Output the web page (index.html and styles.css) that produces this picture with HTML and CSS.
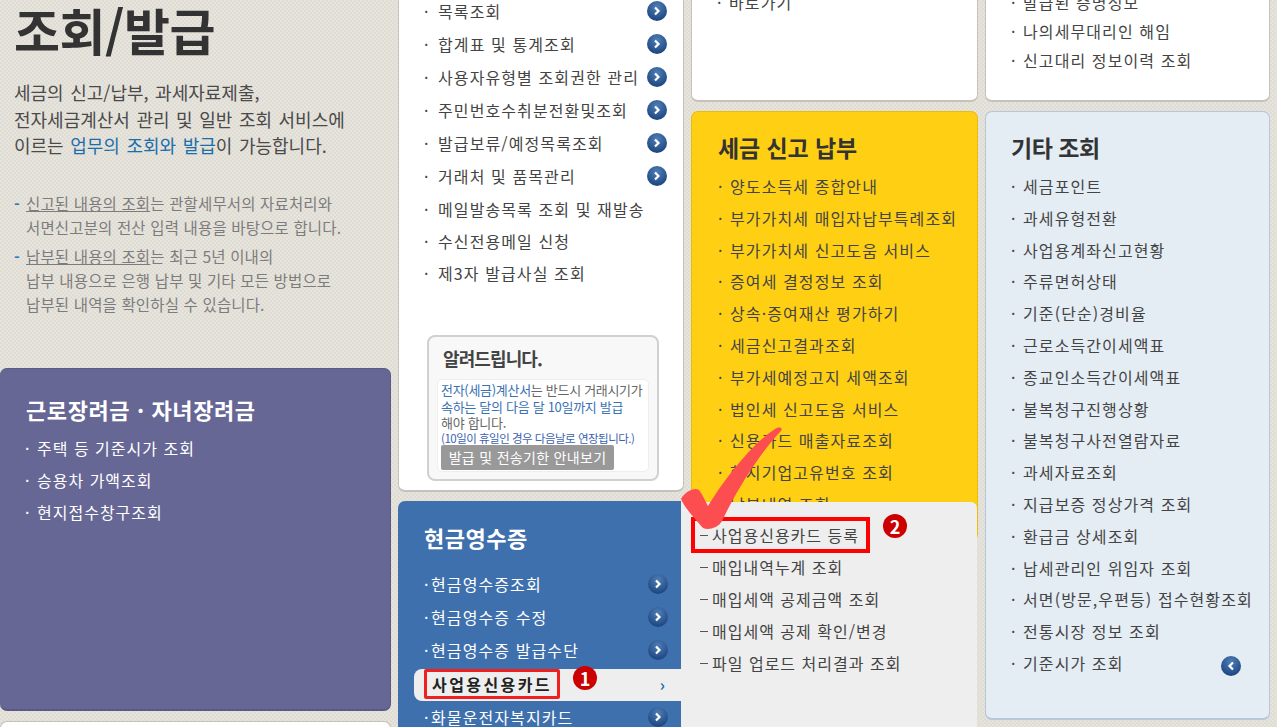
FILE: index.html
```html
<!DOCTYPE html>
<html lang="ko">
<head>
  <meta charset="UTF-8">
  <title>조회/발급</title>
  <link rel="stylesheet" href="styles.css">
</head>
<body>
  <svg class="defs" width="0" height="0">
    <defs>
      <radialGradient id="ball" cx="50%" cy="30%" r="70%">
        <stop offset="0" stop-color="#4f7fb5"/>
        <stop offset="1" stop-color="#1c4480"/>
      </radialGradient>
      <symbol id="go" viewBox="0 0 20 20">
        <circle cx="10" cy="10" r="10" fill="url(#ball)"/>
        <path d="M8 6.5 11.5 10 8 13.5" fill="none" stroke="#fff" stroke-width="2.2"/>
      </symbol>
      <symbol id="back" viewBox="0 0 20 20">
        <circle cx="10" cy="10" r="10" fill="url(#ball)"/>
        <path d="M12 6.5 8.5 10 12 13.5" fill="none" stroke="#fff" stroke-width="2.2"/>
      </symbol>
    </defs>
  </svg>

  <div class="page">
    <div class="col">
      <div class="intro">
        <h1>조회/발급</h1>
        <p class="lead">세금의 신고/납부, 과세자료제출,<br>전자세금계산서 관리 및 일반 조회 서비스에<br>이르는 <b>업무의 조회와 발급</b>이 가능합니다.</p>
        <ul class="notes">
          <li><u>신고된 내용의 조회</u>는 관할세무서의 자료처리와<br>서면신고분의 전산 입력 내용을 바탕으로 합니다.</li>
          <li><u>납부된 내용의 조회</u>는 최근 5년 이내의<br>납부 내용으로 은행 납부 및 기타 모든 방법으로<br>납부된 내역을 확인하실 수 있습니다.</li>
        </ul>
      </div>
      <section class="card purple">
        <h2>근로장려금 · 자녀장려금</h2>
        <ul class="menu">
          <li>주택 등 기준시가 조회</li>
          <li>승용차 가액조회</li>
          <li>현지접수창구조회</li>
        </ul>
      </section>
      <section class="card white stub"></section>
    </div>

    <div class="col">
      <section class="card white issue">
        <ul class="menu">
          <li class="has-go">목록조회<svg class="go"><use href="#go"/></svg></li>
          <li class="has-go">합계표 및 통계조회<svg class="go"><use href="#go"/></svg></li>
          <li class="has-go">사용자유형별 조회권한 관리<svg class="go"><use href="#go"/></svg></li>
          <li class="has-go">주민번호수취분전환및조회<svg class="go"><use href="#go"/></svg></li>
          <li class="has-go">발급보류/예정목록조회<svg class="go"><use href="#go"/></svg></li>
          <li class="has-go">거래처 및 품목관리<svg class="go"><use href="#go"/></svg></li>
          <li>메일발송목록 조회 및 재발송</li>
          <li>수신전용메일 신청</li>
          <li>제3자 발급사실 조회</li>
        </ul>
        <div class="notice">
          <h3>알려드립니다.</h3>
          <div class="notice-body">
            <p><em>전자(세금)계산서</em>는 반드시 거래시기가<br><em>속하는 달의 다음 달 10일까지 발급</em><br>해야 합니다.</p>
            <p class="notice-small">(10일이 휴일인 경우 다음날로 연장됩니다.)</p>
            <span class="notice-btn">발급 및 전송기한 안내보기</span>
          </div>
        </div>
      </section>

      <section class="card blue">
        <h2>현금영수증</h2>
        <ul class="menu">
          <li class="has-go">현금영수증조회<svg class="go"><use href="#go"/></svg></li>
          <li class="has-go">현금영수증 수정<svg class="go"><use href="#go"/></svg></li>
          <li class="has-go">현금영수증 발급수단<svg class="go"><use href="#go"/></svg></li>
          <li class="selected">
            <span class="picked">사업용신용카드</span>
            <span class="badge badge-one">1</span>
            <span class="chev">›</span>
          </li>
          <li class="has-go">화물운전자복지카드<svg class="go"><use href="#go"/></svg></li>
        </ul>
        <div class="flyout">
          <ul>
            <li class="boxed">사업용신용카드 등록<span class="badge badge-two">2</span></li>
            <li>매입내역누계 조회</li>
            <li>매입세액 공제금액 조회</li>
            <li>매입세액 공제 확인/변경</li>
            <li>파일 업로드 처리결과 조회</li>
          </ul>
        </div>
      </section>
    </div>

    <div class="col">
      <section class="card white short">
        <ul class="menu">
          <li>바로가기</li>
        </ul>
      </section>
      <section class="card yellow">
        <h2>세금 신고 납부</h2>
        <ul class="menu">
          <li>양도소득세 종합안내</li>
          <li>부가가치세 매입자납부특례조회</li>
          <li>부가가치세 신고도움 서비스</li>
          <li>증여세 결정정보 조회</li>
          <li>상속·증여재산 평가하기</li>
          <li>세금신고결과조회</li>
          <li>부가세예정고지 세액조회</li>
          <li>법인세 신고도움 서비스</li>
          <li>신용카드 매출자료조회</li>
          <li>현지기업고유번호 조회</li>
          <li>납부내역 조회</li>
        </ul>
      </section>
    </div>

    <div class="col">
      <section class="card white short agent">
        <ul class="menu">
          <li>발급된 증명정보</li>
          <li>나의세무대리인 해임</li>
          <li>신고대리 정보이력 조회</li>
        </ul>
      </section>
      <section class="card pale">
        <h2>기타 조회</h2>
        <ul class="menu">
          <li>세금포인트</li>
          <li>과세유형전환</li>
          <li>사업용계좌신고현황</li>
          <li>주류면허상태</li>
          <li>기준(단순)경비율</li>
          <li>근로소득간이세액표</li>
          <li>종교인소득간이세액표</li>
          <li>불복청구진행상황</li>
          <li>불복청구사전열람자료</li>
          <li>과세자료조회</li>
          <li>지급보증 정상가격 조회</li>
          <li>환급금 상세조회</li>
          <li>납세관리인 위임자 조회</li>
          <li>서면(방문,우편등) 접수현황조회</li>
          <li>전통시장 정보 조회</li>
          <li class="has-go">기준시가 조회<svg class="go go-back"><use href="#back"/></svg></li>
        </ul>
      </section>
    </div>

    <svg class="check" viewBox="0 0 110 110" width="110" height="110">
      <path d="M1 78C5 71 14 66 19 69 23 74 25 80 28 85 42 62 70 24 95 8 100 5 104 7 100 11 84 28 60 62 42 100 38 108 25 110 22 106 14 97 5 87 1 78Z" fill="#fc4e50"/>
    </svg>
  </div>
</body>
</html>
```

FILE: styles.css
```css
* { box-sizing: border-box; }
html, body { margin: 0; height: 727px; overflow: hidden; }
body {
  font-family: "Noto Sans CJK KR", "Noto Sans", sans-serif;
  color: #444;
  background-color: #e7e4dd;
  background-image: conic-gradient(#dfdcd4 25%, transparent 0 50%, #dfdcd4 0 75%, transparent 0);
  background-size: 4px 4px;
}
ul { list-style: none; margin: 0; padding: 0; }
.defs { position: absolute; }

.page {
  position: relative;
  display: grid;
  grid-template-columns: 391px 286px 287px 285px;
  column-gap: 7px;
  height: 727px;
  overflow: hidden;
}

/* 왼쪽 소개 */
.intro { height: 368px; padding: 0 14px; }
.intro h1 {
  margin: 0;
  font-size: 50px;
  line-height: 58px;
  font-weight: 700;
  letter-spacing: -0.5px;
  color: #333;
}
.lead {
  margin: 21px 0 0;
  font-size: 18px;
  line-height: 26.5px;
  word-spacing: 1.5px;
  color: #4a4a4a;
}
.lead b { font-weight: 400; color: #1a6eaa; }
.notes { margin-top: 32px; font-size: 15.5px; line-height: 24px; letter-spacing: 0.15px; color: #7c7c7c; }
.notes li { position: relative; padding-left: 12px; margin-bottom: 5px; }
.notes li::before { content: "-"; position: absolute; left: 0; color: #2a7cc0; font-weight: 700; }

/* 카드 */
.card { border-radius: 7px; border: 1px solid #c4c2bb; border-bottom-width: 2px; }
.card h2 { margin: 0; font-size: 22px; font-weight: 700; letter-spacing: -0.6px; }
.menu { font-size: 16px; letter-spacing: 1.1px; }
.menu li { position: relative; padding-left: 12px; line-height: 32px; height: 32px; white-space: nowrap; }
.menu li::before { content: "·"; position: absolute; left: 0; }
.has-go .go { position: absolute; right: 0; top: 6px; width: 20px; height: 20px; }
.white { background: #fff; }

.purple {
  height: 343px;
  padding: 24px 25px;
  background: #676795;
  border-color: #5a5a86;
  border-left: 0;
  color: #fff;
}
.purple .menu { letter-spacing: 1px; }
.purple h2 { margin: 0 0 7px 1px; line-height: 32px; letter-spacing: 0.6px; }
.stub { height: 40px; margin-top: 10px; }

.issue { height: 512px; margin-top: -20px; padding: 14px 0 0 25px; position: relative; }
.issue .menu { padding-right: 16px; }
.issue .menu li { padding-left: 14px; }
.issue .has-go { height: 33px; line-height: 33px; }

.notice {
  position: absolute;
  left: 28px;
  top: 354px;
  width: 232px;
  height: 146px;
  padding: 6px 8px 0;
  background: #f8f8f8;
  border: 2px solid #d0d0d0;
  border-radius: 8px;
}
.notice h3 { margin: 0 0 6px 6px; font-size: 18px; line-height: 30px; letter-spacing: -0.9px; color: #444; }
.notice-body {
  height: 93px;
  padding: 2px 3px;
  background: #fff;
  border: 1px solid #eee;
  border-radius: 5px;
  font-size: 13px;
  line-height: 16.5px;
  letter-spacing: -0.3px;
  color: #666;
  white-space: nowrap;
}
.notice-body p { margin: 0; }
.notice-body em { font-style: normal; color: #3a72b4; }
.notice-body .notice-small { font-size: 11.5px; line-height: 13px; color: #3a62b0; letter-spacing: -0.5px; }
.notice-btn {
  display: block;
  width: 173px;
  height: 25px;
  background: #999;
  border-radius: 2px;
  color: #fff;
  font-size: 14px;
  line-height: 25px;
  letter-spacing: 0.3px;
  text-align: center;
}

.blue {
  position: relative;
  z-index: 1;
  width: 283px;
  height: 260px;
  margin-top: 9px;
  padding: 20px 0 0 26px;
  background: #3f70ae;
  border: 0;
  border-radius: 7px 0 0 0;
  color: #fff;
}
.blue h2 { line-height: 32px; margin-bottom: 15px; letter-spacing: 0.5px; }
.blue .menu li { height: 33px; line-height: 33px; padding-left: 7px; margin-right: 13px; }
.blue .menu .selected {
  height: 32px;
  line-height: 32px;
  margin: 2px 0 0 -10px;
  padding-left: 0;
  background: #eee;
  border-radius: 8px 0 0 8px;
  color: #222;
}
.blue .menu .selected::before { content: none; }
.picked {
  position: absolute;
  left: 10px;
  top: 0;
  width: 136px;
  height: 30px;
  border: 3px solid #f0201f;
  border-radius: 2px;
  font-weight: 700;
  font-size: 16px;
  line-height: 24px;
  text-align: center;
  letter-spacing: 2.4px;
}
.chev { position: absolute; right: 15px; top: -1px; color: #1a6eaa; font-weight: 700; font-size: 16px; }
.badge {
  position: absolute;
  width: 24px;
  height: 24px;
  border-radius: 50%;
  background: #c00;
  color: #fff;
  font-weight: 700;
  font-size: 18px;
  line-height: 24px;
  text-align: center;
  letter-spacing: 0;
}
.badge-one { left: 159px; top: -3px; }
.badge-two { left: 202px; top: -5px; }

.flyout {
  position: absolute;
  left: 283px;
  top: 1px;
  width: 296px;
  height: 260px;
  padding-top: 17px;
  background: #eee;
  color: #444;
  border-radius: 0 6px 0 0;
}
.flyout li { position: relative; height: 32px; line-height: 32px; padding-left: 31px; font-size: 16px; letter-spacing: 1px; }
.flyout li::before { content: ""; position: absolute; left: 19px; top: 16px; width: 8px; height: 1px; background: #555; }
.flyout .boxed::after {
  content: "";
  box-sizing: border-box;
  position: absolute;
  left: 10px;
  top: -2px;
  width: 179px;
  height: 36px;
  border: 4px solid #f00;
}

.short { height: 122px; margin-top: -20px; }
.short .menu { padding: 5px 0 0 25px; }
.agent .menu { padding-top: 7px; }
.agent .menu li { height: 29px; line-height: 29px; }

.yellow {
  height: 430px;
  margin-top: 9px;
  padding: 19px 0 0 26px;
  background: #ffcf14;
  border-color: #e8bd12;
}
.pale {
  height: 609px;
  margin-top: 9px;
  padding: 19px 0 0 25px;
  background: #e4ecf4;
  border-color: #b7c6d8;
}
.yellow h2, .pale h2 { line-height: 32px; margin-bottom: 8px; color: #333; font-size: 23px; }
.yellow h2 { letter-spacing: -0.1px; }
.pale h2 { letter-spacing: -0.5px; }
.yellow .menu li, .pale .menu li { height: 31.8px; line-height: 31.8px; }
.pale .go-back { left: 210px; right: auto; top: 8px; }

.check { position: absolute; z-index: 2; left: 680px; top: 421px; }
```
